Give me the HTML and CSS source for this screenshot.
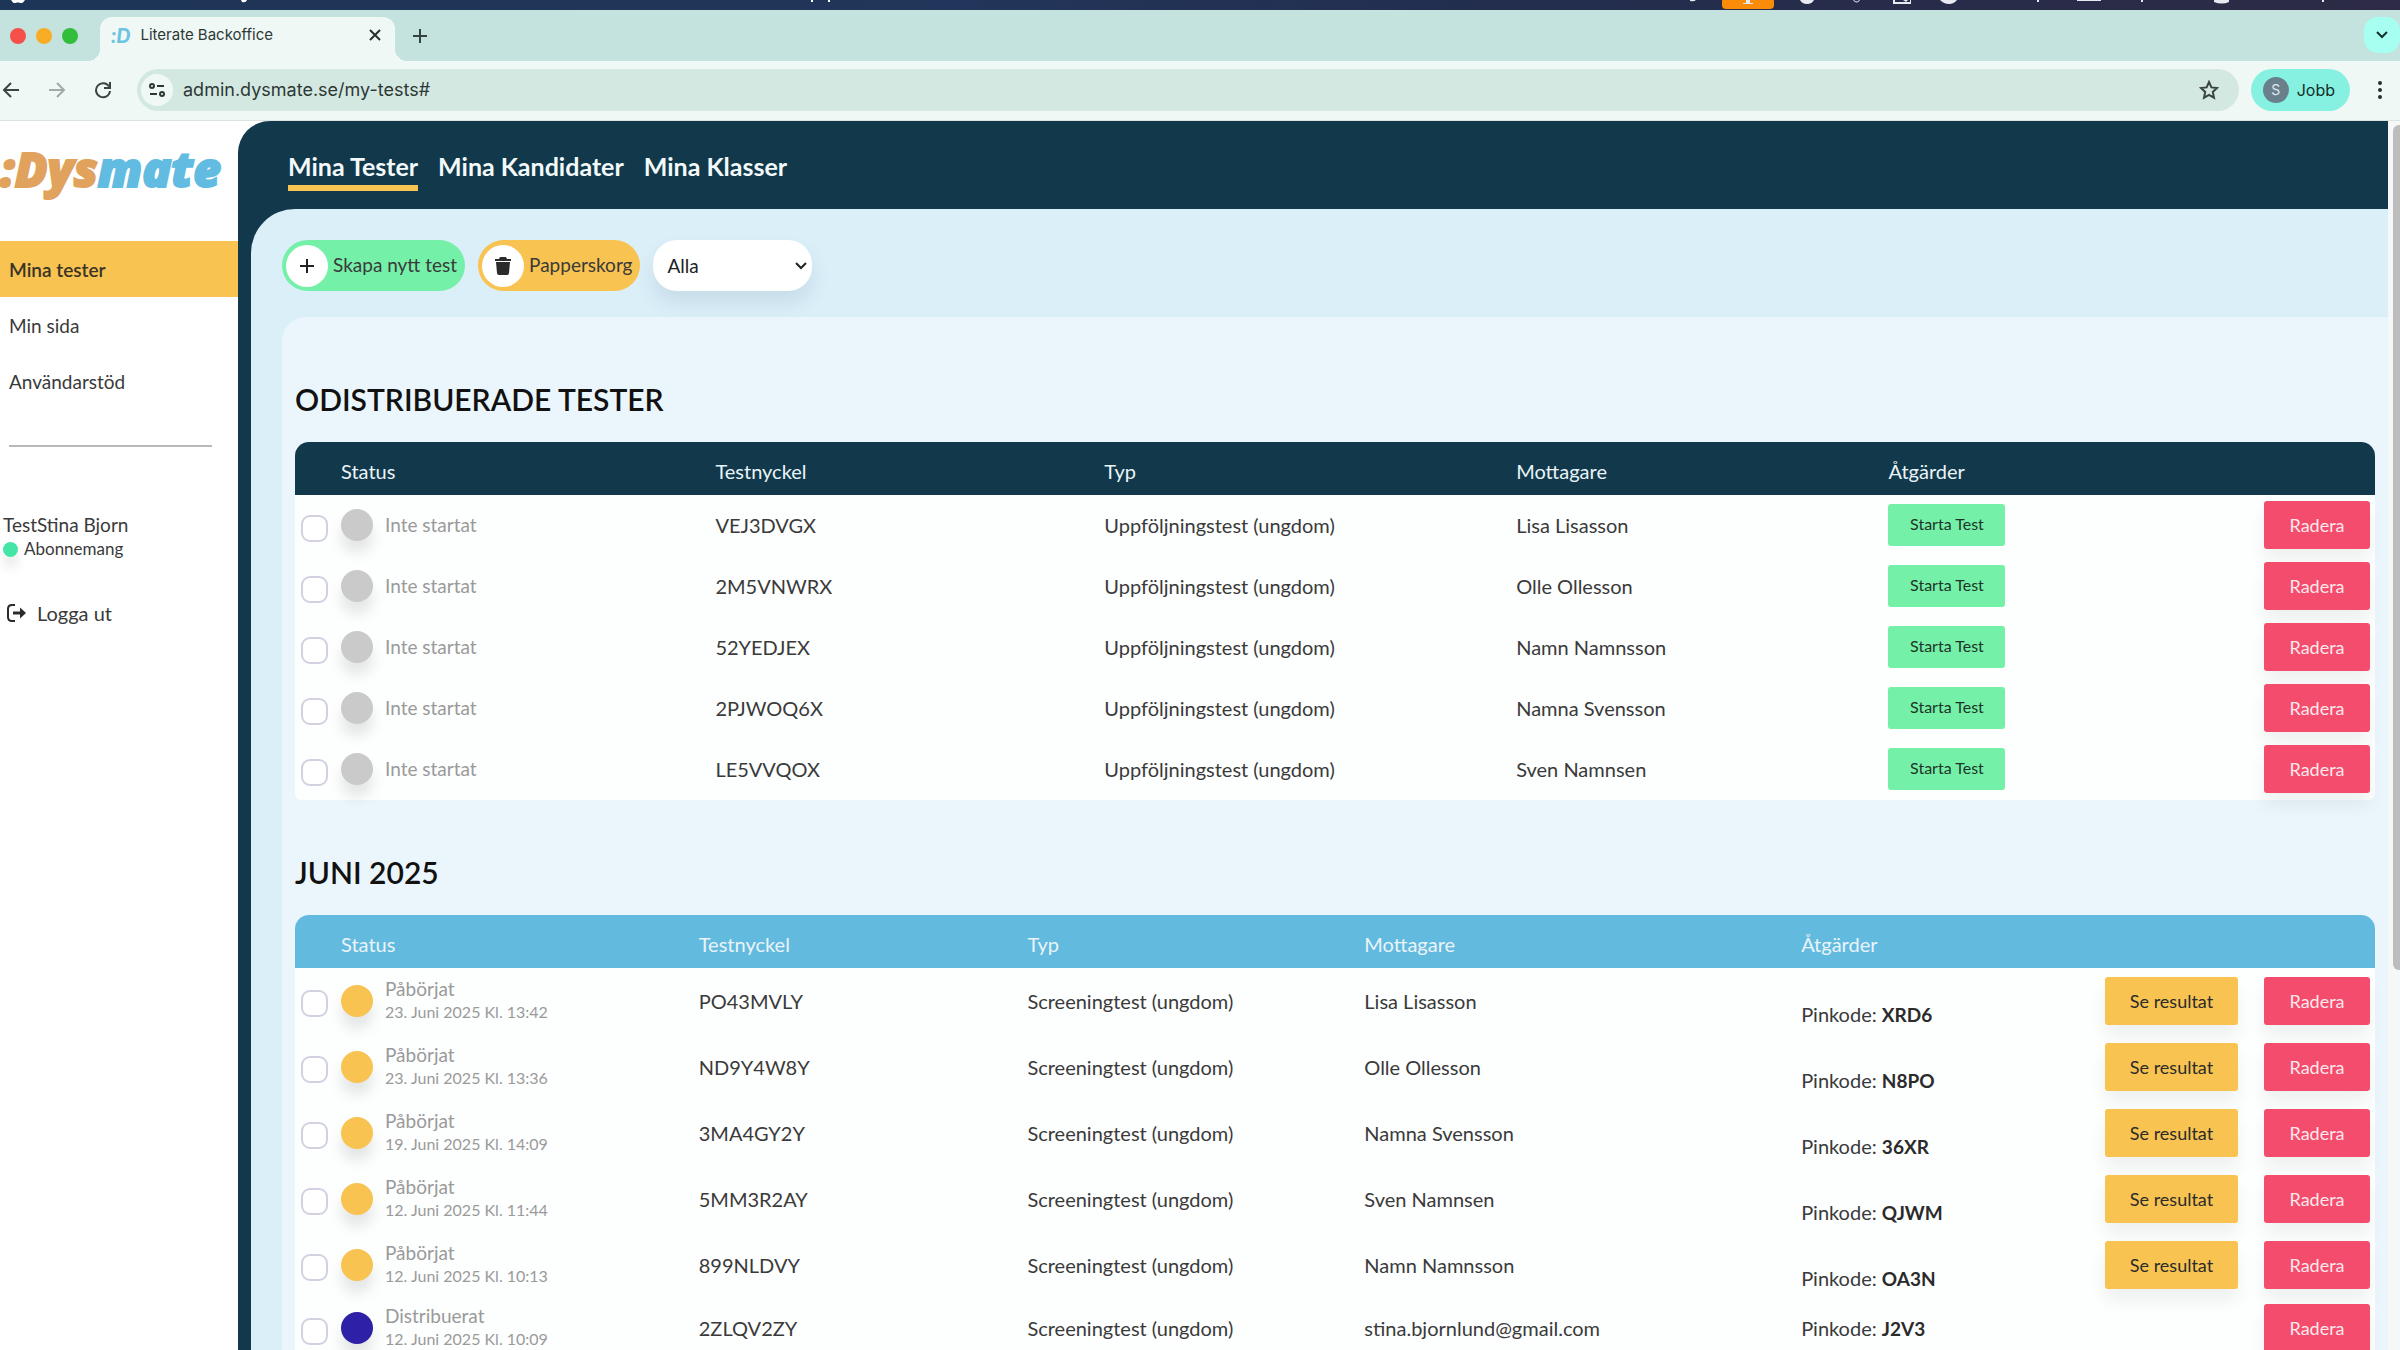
FILE: index.html
```html
<!DOCTYPE html>
<html lang="sv">
<head>
<meta charset="utf-8">
<title>Literate Backoffice</title>
<link rel="stylesheet" href="styles.css">
</head>
<body>
<div class="menubar">
  <svg class="menubar-left" width="900" height="10" viewBox="0 0 900 10" fill="#fff"><path d="M11 0h14l-2 2.500q-2 1-4 0h-2q-3 1-4 0z"/><path d="M241 0h6q-1 3-5 2zM811 0h2v2h-2zM828 0h2v2h-2z"/></svg>
  <svg width="710" height="10" viewBox="0 0 710 10" fill="#e8eaf2"><path d="M0 0h6q-2 2-6 1z"/><rect x="32" y="-6" width="52" height="15" rx="4" fill="#fb8c0a"/><path d="M56 0h4v3h3v1H53V3h3zM0 0M110 0h14q-2 4-7 4t-7-4zM163 0q4 5 7 0l-1-0q-2 3-5 0zM203 0h2v2h15V0h1v4h-18zM213 0h5l-2 2zM250 0h17q-3 4-8 4t-9-4zM347 0h2v2h-2zM387 0h24v1h-24zM451 0h2v2h-2zM524 0h15v2q-7 3-15 0zM632 0h2v2h-2z"/></svg>
</div>
<header class="tabstrip">
  <div class="lights"><i class="red"></i><i class="amber"></i><i class="green"></i></div>
  <div class="tab">
    <span class="favicon">:D</span>
    <span class="tab-title">Literate Backoffice</span>
    <button class="bare" aria-label="Stäng flik"><svg width="12" height="12" viewBox="0 0 12 12" stroke="#26302c" stroke-width="2"><path d="M1 1l10 10M11 1L1 11"/></svg></button>
  </div>
  <button class="bare new-tab" aria-label="Ny flik"><svg width="14" height="14" viewBox="0 0 14 14" stroke="#35433e" stroke-width="2"><path d="M7 0v14M0 7h14"/></svg></button>
  <button class="bare tab-search" aria-label="Sök flikar"><svg width="12" height="8" viewBox="0 0 12 8" fill="none" stroke="#14302c" stroke-width="2"><path d="M1 1l5 5 5-5"/></svg></button>
</header>
<div class="toolbar">
  <button class="bare" aria-label="Bakåt"><svg width="18" height="16" viewBox="0 0 18 16" fill="none" stroke="#3a4541" stroke-width="2"><path d="M17 8H2M9 1L2 8l7 7"/></svg></button>
  <button class="bare" aria-label="Framåt"><svg width="18" height="16" viewBox="0 0 18 16" fill="none" stroke="#a0aba7" stroke-width="2"><path d="M1 8h15M9 1l7 7-7 7"/></svg></button>
  <button class="bare" aria-label="Läs in igen"><svg width="18" height="18" viewBox="0 0 18 18" fill="none" stroke="#3a4541" stroke-width="2"><path d="M15 5.500A7 7 0 1 0 16 10M16 1v6h-6"/></svg></button>
  <div class="omnibox">
    <span class="site"><svg width="16" height="16" viewBox="0 0 16 16" fill="none" stroke="#2d3835" stroke-width="2"><circle cx="3" cy="4" r="2"/><path d="M8 4h7M1 12h7"/><circle cx="13" cy="12" r="2"/></svg></span>
    <input class="url" aria-label="Adress" value="admin.dysmate.se/my-tests#">
    <svg width="20" height="20" viewBox="0 0 20 20" fill="none" stroke="#3a4541" stroke-width="2"><path d="M10 2l2.400 5.400 5.600.6-4.200 3.900 1.200 5.800L10 14.800l-5 2.900 1.200-5.800L2 8l5.600-.6z"/></svg>
  </div>
  <button class="profile"><span>S</span>Jobb</button>
  <button class="bare" aria-label="Meny"><svg width="4" height="18" viewBox="0 0 4 18" fill="#26302c"><circle cx="2" cy="2" r="2"/><circle cx="2" cy="9" r="2"/><circle cx="2" cy="16" r="2"/></svg></button>
</div>
<div class="app">
  <aside class="sidebar">
    <a class="logo" href="#"><span>:Dys</span>mate</a>
    <nav class="side-nav">
      <a class="active" href="#">Mina tester</a>
      <a href="#">Min sida</a>
      <a href="#">Användarstöd</a>
    </nav>
    <hr>
    <div class="user">TestStina Bjorn<span class="plan"><i></i>Abonnemang</span></div>
    <a class="logout" href="#"><svg width="20" height="18" viewBox="0 0 20 18" fill="none" stroke="#2b2b2b" stroke-width="2"><path d="M8 1H5Q1 1 1 5v8q0 4 4 4h3"/><path d="M6 9h8" stroke-width="3"/><path d="M13 3.500L19 9l-6 5.500z" fill="#2b2b2b" stroke="none"/></svg>Logga ut</a>
  </aside>
  <main class="main">
    <nav class="top-nav">
      <a class="active" href="#">Mina Tester</a>
      <a href="#">Mina Kandidater</a>
      <a href="#">Mina Klasser</a>
    </nav>
    <div class="content">
      <div class="actions">
        <button class="pill green"><span><svg width="14" height="14" viewBox="0 0 14 14" stroke="#222" stroke-width="2"><path d="M7 0v14M0 7h14"/></svg></span>Skapa nytt test</button>
        <button class="pill yellow"><span><svg width="16" height="18" viewBox="0 0 16 18" fill="#2b2b2b"><path d="M5 0h6l1 2h4v2H0V2h4zM1 5h14l-1 11q0 2-2 2H4q-2 0-2-2z"/></svg></span>Papperskorg</button>
        <div class="filter">
          <select aria-label="Filter"><option>Alla</option></select>
          <svg width="12" height="8" viewBox="0 0 12 8" fill="none" stroke="#222" stroke-width="2"><path d="M1 1l5 5 5-5"/></svg>
        </div>
      </div>
      <section class="panel">
        <h2>ODISTRIBUERADE TESTER</h2>
        <table class="tests pending">
          <colgroup><col class="c-check"><col class="c-status"><col class="c-key"><col class="c-type"><col class="c-to"><col><col class="c-delete"></colgroup>
          <thead><tr><th></th><th>Status</th><th>Testnyckel</th><th>Typ</th><th>Mottagare</th><th>Åtgärder</th><th></th></tr></thead>
          <tbody>
            <tr><td><input type="checkbox" aria-label="Välj VEJ3DVGX"></td><td><div class="status"><i></i>Inte startat</div></td><td>VEJ3DVGX</td><td>Uppföljningstest (ungdom)</td><td>Lisa Lisasson</td><td><button class="start">Starta Test</button></td><td><button class="delete">Radera</button></td></tr>
            <tr><td><input type="checkbox" aria-label="Välj 2M5VNWRX"></td><td><div class="status"><i></i>Inte startat</div></td><td>2M5VNWRX</td><td>Uppföljningstest (ungdom)</td><td>Olle Ollesson</td><td><button class="start">Starta Test</button></td><td><button class="delete">Radera</button></td></tr>
            <tr><td><input type="checkbox" aria-label="Välj 52YEDJEX"></td><td><div class="status"><i></i>Inte startat</div></td><td>52YEDJEX</td><td>Uppföljningstest (ungdom)</td><td>Namn Namnsson</td><td><button class="start">Starta Test</button></td><td><button class="delete">Radera</button></td></tr>
            <tr><td><input type="checkbox" aria-label="Välj 2PJWOQ6X"></td><td><div class="status"><i></i>Inte startat</div></td><td>2PJWOQ6X</td><td>Uppföljningstest (ungdom)</td><td>Namna Svensson</td><td><button class="start">Starta Test</button></td><td><button class="delete">Radera</button></td></tr>
            <tr><td><input type="checkbox" aria-label="Välj LE5VVQOX"></td><td><div class="status"><i></i>Inte startat</div></td><td>LE5VVQOX</td><td>Uppföljningstest (ungdom)</td><td>Sven Namnsen</td><td><button class="start">Starta Test</button></td><td><button class="delete">Radera</button></td></tr>
          </tbody>
        </table>
        <h2>JUNI 2025</h2>
        <table class="tests month">
          <colgroup><col class="c-check"><col class="c-status"><col class="c-key"><col class="c-type"><col class="c-to"><col><col class="c-result"><col class="c-delete"></colgroup>
          <thead><tr><th></th><th>Status</th><th>Testnyckel</th><th>Typ</th><th>Mottagare</th><th>Åtgärder</th><th></th><th></th></tr></thead>
          <tbody>
            <tr><td><input type="checkbox" aria-label="Välj PO43MVLY"></td><td><div class="status started"><i></i><div>Påbörjat<small>23. Juni 2025 Kl. 13:42</small></div></div></td><td>PO43MVLY</td><td>Screeningtest (ungdom)</td><td>Lisa Lisasson</td><td class="pin">Pinkode: <b>XRD6</b></td><td><button class="result">Se resultat</button></td><td><button class="delete">Radera</button></td></tr>
            <tr><td><input type="checkbox" aria-label="Välj ND9Y4W8Y"></td><td><div class="status started"><i></i><div>Påbörjat<small>23. Juni 2025 Kl. 13:36</small></div></div></td><td>ND9Y4W8Y</td><td>Screeningtest (ungdom)</td><td>Olle Ollesson</td><td class="pin">Pinkode: <b>N8PO</b></td><td><button class="result">Se resultat</button></td><td><button class="delete">Radera</button></td></tr>
            <tr><td><input type="checkbox" aria-label="Välj 3MA4GY2Y"></td><td><div class="status started"><i></i><div>Påbörjat<small>19. Juni 2025 Kl. 14:09</small></div></div></td><td>3MA4GY2Y</td><td>Screeningtest (ungdom)</td><td>Namna Svensson</td><td class="pin">Pinkode: <b>36XR</b></td><td><button class="result">Se resultat</button></td><td><button class="delete">Radera</button></td></tr>
            <tr><td><input type="checkbox" aria-label="Välj 5MM3R2AY"></td><td><div class="status started"><i></i><div>Påbörjat<small>12. Juni 2025 Kl. 11:44</small></div></div></td><td>5MM3R2AY</td><td>Screeningtest (ungdom)</td><td>Sven Namnsen</td><td class="pin">Pinkode: <b>QJWM</b></td><td><button class="result">Se resultat</button></td><td><button class="delete">Radera</button></td></tr>
            <tr><td><input type="checkbox" aria-label="Välj 899NLDVY"></td><td><div class="status started"><i></i><div>Påbörjat<small>12. Juni 2025 Kl. 10:13</small></div></div></td><td>899NLDVY</td><td>Screeningtest (ungdom)</td><td>Namn Namnsson</td><td class="pin">Pinkode: <b>OA3N</b></td><td><button class="result">Se resultat</button></td><td><button class="delete">Radera</button></td></tr>
            <tr class="sent"><td><input type="checkbox" aria-label="Välj 2ZLQV2ZY"></td><td><div class="status distributed"><i></i><div>Distribuerat<small>12. Juni 2025 Kl. 10:09</small></div></div></td><td>2ZLQV2ZY</td><td>Screeningtest (ungdom)</td><td>stina.bjornlund@gmail.com</td><td>Pinkode: <b>J2V3</b></td><td></td><td><button class="delete">Radera</button></td></tr>
          </tbody>
        </table>
      </section>
    </div>
  </main>
  <div class="scrollbar"><div class="thumb"></div></div>
</div>
</body>
</html>
```
FILE: styles.css
```css
* { box-sizing: border-box; }

body {
  margin: 0;
  height: 100vh;
  overflow: hidden;
  display: flex;
  flex-direction: column;
  font: 20px/24px Lato, "Liberation Sans", sans-serif;
  color: #3a3a3a;
  background: #fff;
}

a { color: inherit; text-decoration: none; }
button, select, input { font: inherit; color: inherit; margin: 0; }
button { border: 0; padding: 0; cursor: pointer; }
svg { display: block; flex: none; }
.bare { background: none; }

/* Browser chrome */
.menubar {
  flex: none;
  height: 10px;
  display: flex;
  justify-content: space-between;
  overflow: hidden;
  background: linear-gradient(90deg, #1d3557, #22355a 40%, #232d4d 65%, #2d2b45);
}

.tabstrip {
  flex: none;
  height: 51px;
  display: flex;
  align-items: center;
  padding: 7px 0 0 10px;
  background: #c5e3de;
  font: 15px/20px Inter, "Liberation Sans", sans-serif;
}
.lights { display: flex; gap: 10px; width: 90px; margin-top: -6px; }
.lights i { width: 16px; height: 16px; border-radius: 50%; }
.lights .red { background: #f6504b; }
.lights .amber { background: #f9ad27; }
.lights .green { background: #32bd3c; }
.tab {
  position: relative;
  display: flex;
  align-items: center;
  gap: 10px;
  width: 295px;
  height: 44px;
  padding: 0 14px 8px 11px;
  border-radius: 12px 12px 0 0;
  background: #f0f8f5;
  color: #2d3835;
}
.tab::before, .tab::after {
  content: "";
  position: absolute;
  bottom: 0;
  width: 12px;
  height: 12px;
}
.tab::before { left: -12px; background: radial-gradient(circle at 0 0, transparent 12px, #f0f8f5 12px); }
.tab::after { right: -12px; background: radial-gradient(circle at 100% 0, transparent 12px, #f0f8f5 12px); }
.favicon { font: italic 900 20px/20px Lato, sans-serif; color: #6cc3e2; }
.tab-title { flex: 1; }
.new-tab { margin: -6px 0 0 18px; }
.tab-search {
  display: grid;
  place-items: center;
  width: 36px;
  height: 36px;
  margin: -8px 0 0 auto;
  border-radius: 14px;
  background: #a6fff0;
}

.toolbar {
  flex: none;
  height: 60px;
  display: flex;
  align-items: center;
  gap: 28px;
  padding: 0 18px 1px 2px;
  background: #f0f8f5;
  border-bottom: 1px solid #dbe3e0;
  font: 18px/24px Inter, "Liberation Sans", sans-serif;
}
.omnibox {
  flex: 1;
  display: flex;
  align-items: center;
  height: 42px;
  margin: 0 -16px 0 -3px;
  padding: 0 20px 0 4px;
  border-radius: 21px;
  background: #d4e8e2;
}
.site {
  display: grid;
  place-items: center;
  width: 32px;
  height: 32px;
  margin-right: 10px;
  border-radius: 50%;
  background: #f0f8f5;
}
.url { flex: 1; border: 0; padding: 0; background: none; color: #2d3835; }
.profile {
  display: flex;
  align-items: center;
  gap: 8px;
  height: 42px;
  padding: 0 15px 0 12px;
  border-radius: 21px;
  background: #86f1e0;
  color: #14302c;
  font-size: 16px;
}
.profile span {
  width: 26px;
  height: 26px;
  border-radius: 50%;
  background: #6a7f8c;
  color: #dfe8ec;
  font-size: 14px;
  line-height: 26px;
}

/* Application frame */
.app { flex: 1; min-height: 0; display: flex; }
.sidebar { flex: none; width: 238px; font-size: 19px; }
.logo {
  display: block;
  height: 120px;
  padding-top: 20px;
  font: italic 800 48px/56px "Open Sans", sans-serif;
  color: #62bbe0;
  -webkit-text-stroke: 2px currentColor;
  stroke-linejoin: round;
}
.logo span { color: #e0a25c; }
.side-nav a { display: block; padding: 17px 9px 15px; }
.side-nav .active { background: #f8c350; font-weight: 600; color: #3a3427; }
hr { margin: 36px 26px 0 9px; border: 0; border-top: 2px solid #b9b9b9; }
.user { padding: 66px 3px 0; }
.plan { display: flex; align-items: center; gap: 6px; font-size: 17px; }
.plan i {
  width: 15px;
  height: 15px;
  border-radius: 50%;
  background: #45e6a5;
  box-shadow: 0 10px 12px rgba(0, 0, 0, .1);
}
.logout { display: flex; align-items: center; gap: 10px; padding: 40px 7px 0; font-size: 20px; }

.main { flex: 1; min-width: 0; background: #11394b; border-top-left-radius: 32px; }
.top-nav {
  display: flex;
  gap: 20px;
  height: 88px;
  padding: 29px 50px 0;
  font-size: 25px;
  line-height: 32px;
  font-weight: 700;
  color: #f4f9fb;
}
.top-nav .active { height: 41px; border-bottom: 6px solid #f8c350; }
.content {
  margin-left: 13px;
  min-height: 100%;
  padding: 31px 0 0 31px;
  border-top-left-radius: 44px;
  background: #dbeff9;
}
.actions { display: flex; gap: 13px; margin-bottom: 26px; font-size: 19px; }
.pill {
  display: flex;
  align-items: center;
  gap: 5px;
  height: 51px;
  padding: 0 8px 2px 4px;
  border-radius: 26px;
}
.pill.green { background: #74f0a8; }
.pill.yellow { background: #f8c350; }
.pill span {
  display: grid;
  place-items: center;
  width: 42px;
  height: 42px;
  margin-top: 2px;
  border-radius: 50%;
  background: #fff;
}
.filter { position: relative; width: 159px; }
.filter select {
  appearance: none;
  width: 100%;
  height: 51px;
  padding: 0 14px;
  border: 0;
  border-radius: 24px;
  background: #fff;
  color: #222;
  box-shadow: 0 12px 20px rgba(20, 60, 90, .1);
}
.filter svg { position: absolute; right: 5px; top: 22px; }

.panel { padding: 60px 13px 0; border-top-left-radius: 24px; background: #ebf6fc; }
h2 { margin: 0 0 21px; font-size: 30px; line-height: 44px; font-weight: 600; color: #111; }
.tests {
  width: 100%;
  margin-bottom: 50px;
  table-layout: fixed;
  border-collapse: separate;
  border-spacing: 0;
  background: #fdfefe;
  border-radius: 14px 14px 6px 6px;
}
th {
  height: 53px;
  padding: 5px 0 0;
  text-align: left;
  font-weight: 400;
  color: #eaf4f8;
  background: #11394b;
}
.month th { background: #63badf; }
th:first-child { border-top-left-radius: 14px; }
th:last-child { border-top-right-radius: 14px; }
td { height: 61px; padding: 0 0 1px; vertical-align: middle; }
.month td { height: 66px; }
.month .sent td { height: 61px; }
.c-check { width: 46px; }
.c-delete { width: 111px; }
.c-result { width: 159px; }
.c-status { width: 18%; }
.c-key { width: 18.7%; }
.c-type { width: 19.8%; }
.c-to { width: 17.9%; }
.month .c-status { width: 17.2%; }
.month .c-key { width: 15.8%; }
.month .c-type { width: 16.2%; }
.month .c-to { width: 21%; }

input[type="checkbox"] {
  appearance: none;
  display: block;
  width: 27px;
  height: 27px;
  margin: 6px 0 0 6px;
  border: 2px solid #d3d0e2;
  border-radius: 9px;
  background: #fff;
}
.status { display: flex; align-items: center; gap: 12px; font-size: 19px; line-height: 22px; color: #9a9a9a; }
.status i {
  width: 32px;
  height: 32px;
  border-radius: 50%;
  background: #cacaca;
  box-shadow: 0 12px 14px rgba(0, 0, 0, .1);
}
.status.started i { background: #f8c350; }
.status.distributed i { background: #2f20a8; }
.status small { display: block; font-size: 16px; line-height: 24px; }
.month .pin { padding-top: 27px; }
b { font-size: 19px; color: #2b2b2b; }
.start, .delete, .result { border-radius: 3px; }
.start { display: block; width: 117px; height: 42px; padding-bottom: 2px; background: #74f0a8; color: #1d3527; font-size: 16px; }
.delete, .result { display: block; height: 48px; font-size: 18px; box-shadow: 0 12px 18px rgba(0, 0, 0, .06); }
.delete { width: 106px; background: #f44c6c; color: #fde8ec; }
.result { width: 133px; background: #f8c350; color: #2b2b2b; }

.scrollbar { flex: none; width: 12px; padding: 4px 0 0 5px; background: #f6f8f8; }
.thumb { height: 69%; border-radius: 6px 0 0 6px; background: #bdbdbd; }
```
